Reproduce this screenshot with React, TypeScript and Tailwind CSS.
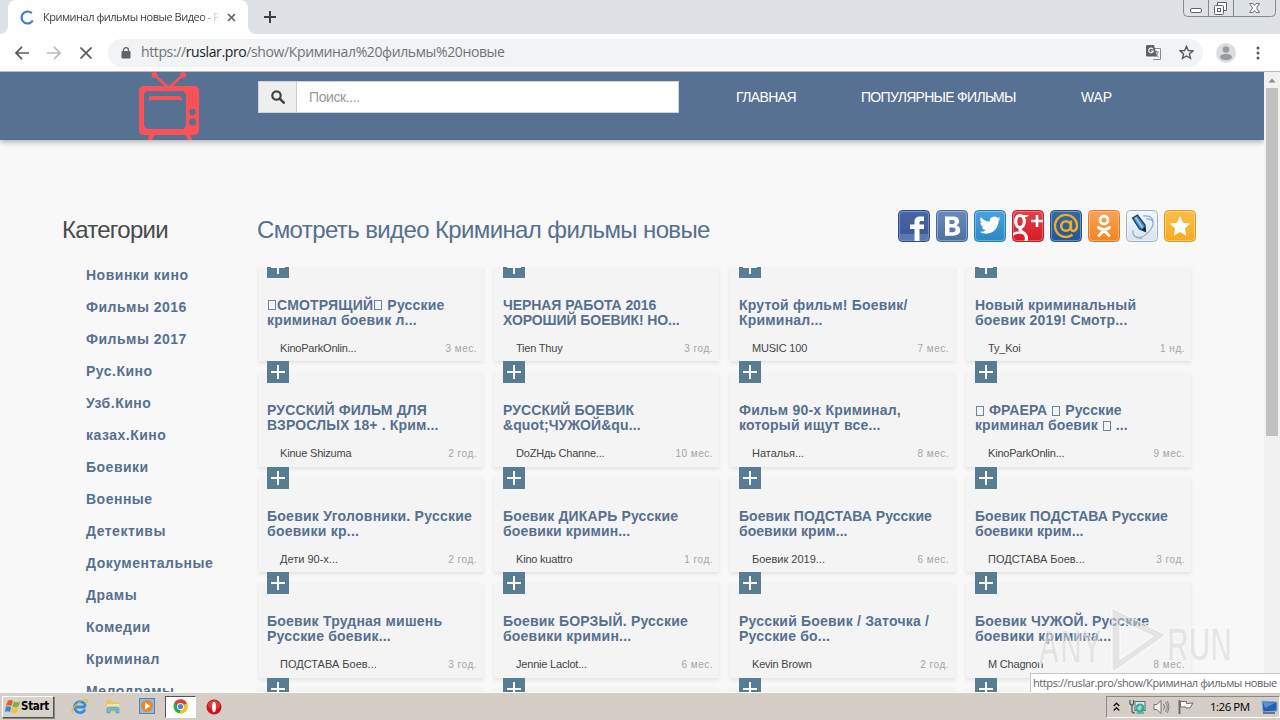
import React from "react";

const UI = "font-['Open_Sans','Noto_Sans',sans-serif]";

type Video = { t: [string, string]; by: string; ago: string; k?: string };

const videos: Video[] = [
  { t: ["▯СМОТРЯЩИЙ▯ Русские", "криминал боевик л..."], by: "KinoParkOnlin...", ago: "3 мес." },
  { t: ["ЧЕРНАЯ РАБОТА 2016", "ХОРОШИЙ БОЕВИК! НО..."], by: "Tien Thuy", ago: "3 год.", k: "tracking-[-0.08px]" },
  { t: ["Крутой фильм! Боевик/", "Криминал..."], by: "MUSIC 100", ago: "7 мес." },
  { t: ["Новый криминальный", "боевик 2019! Смотр..."], by: "Ty_Koi", ago: "1 нд." },
  { t: ["РУССКИЙ ФИЛЬМ ДЛЯ", "ВЗРОСЛЫХ 18+ . Крим..."], by: "Kinue Shizuma", ago: "2 год.", k: "tracking-[0.14px]" },
  { t: ["РУССКИЙ БОЕВИК", "&quot;ЧУЖОЙ&qu..."], by: "DoZHдь Channe...", ago: "10 мес.", k: "tracking-[0.1px]" },
  { t: ["Фильм 90-х Криминал,", "который ищут все..."], by: "Наталья...", ago: "8 мес." },
  { t: ["▯ ФРАЕРА ▯ Русские", "криминал боевик ▯ ..."], by: "KinoParkOnlin...", ago: "9 мес.", k: "tracking-[0.1px]" },
  { t: ["Боевик Уголовники. Русские", "боевики кр..."], by: "Дети 90-х...", ago: "2 год.", k: "tracking-[0.25px]" },
  { t: ["Боевик ДИКАРЬ Русские", "боевики кримин..."], by: "Kino kuattro", ago: "1 год.", k: "tracking-[0.14px]" },
  { t: ["Боевик ПОДСТАВА Русские", "боевики крим..."], by: "Боевик 2019...", ago: "6 мес.", k: "tracking-[0.04px]" },
  { t: ["Боевик ПОДСТАВА Русские", "боевики крим..."], by: "ПОДСТАВА Боев...", ago: "3 год.", k: "tracking-[0.04px]" },
  { t: ["Боевик Трудная мишень", "Русские боевик..."], by: "ПОДСТАВА Боев...", ago: "3 год." },
  { t: ["Боевик БОРЗЫЙ. Русские", "боевики кримин..."], by: "Jennie Laclot...", ago: "6 мес." },
  { t: ["Русский Боевик / Заточка /", "Русские бо..."], by: "Kevin Brown", ago: "2 год." },
  { t: ["Боевик ЧУЖОЙ. Русские", "боевики кримина..."], by: "M Chagnon", ago: "8 мес." },
  { t: ["", ""], by: "", ago: "" },
  { t: ["", ""], by: "", ago: "" },
  { t: ["", ""], by: "", ago: "" },
  { t: ["", ""], by: "", ago: "" },
];

const categories = [
  "Новинки кино", "Фильмы 2016", "Фильмы 2017", "Рус.Кино", "Узб.Кино", "казах.Кино", "Боевики",
  "Военные", "Детективы", "Документальные", "Драмы", "Комедии", "Криминал", "Мелодрамы",
];

function TitleLine({ text }: { text: string }) {
  return (
    <div className="flex h-[15px] items-center whitespace-pre">
      {text.split(/(▯)/).map((p, i) =>
        p === "▯" ? (
          <span key={i} className="mr-px ml-px inline-block h-[10px] w-[8px] border border-[#6b83a0]" />
        ) : (
          <span key={i}>{p}</span>
        ),
      )}
    </div>
  );
}

function Card({ v }: { v: Video }) {
  const latin = /^[A-Z]/.test(v.by);
  return (
    <div className="flex h-[105.5px] w-[225px] flex-col pt-[10.500px]">
      <div className="flex h-[95px] flex-col bg-[#f4f4f4] px-[9px] shadow-[0_2px_4px_rgba(0,0,0,0.09)]">
        <div className="-mt-[10.500px] flex h-[22px] w-[22px] shrink-0 items-center justify-center bg-[#587d93]">
          <svg width="22" height="22" viewBox="0 0 22 22" shapeRendering="crispEdges">
            <path d="M11 4v14M4 11h14" stroke="#fff" strokeWidth="2" />
          </svg>
        </div>
        <div className={`pt-[20px] text-[14px] leading-[15px] font-bold text-[#56708f] ${v.k ?? "tracking-[0.2px]"}`}>
          <TitleLine text={v.t[0]} />
          <TitleLine text={v.t[1]} />
        </div>
        <div className="mt-[13px] flex h-[15px] items-center justify-between pl-[13px]">
          <span className={`text-[11px] text-[#444] ${latin ? "tracking-[-0.2px]" : ""}`}>{v.by}</span>
          <span className="-mr-[3px] text-[10px] tracking-[0.5px] text-[#a5a5a5]">{v.ago}</span>
        </div>
      </div>
    </div>
  );
}

function Tile({ id, a, b, edge, children }: { id: string; a: string; b: string; edge: string; children: React.ReactNode }) {
  return (
    <svg width="32" height="32" viewBox="0 0 32 32">
      <defs>
        <linearGradient id={id} x1="0" y1="0" x2="0" y2="1">
          <stop offset="0" stopColor={a} />
          <stop offset="1" stopColor={b} />
        </linearGradient>
        <clipPath id={id + "c"}><rect x="1" y="1" width="30" height="30" rx="3.5" /></clipPath>
      </defs>
      <rect x="0.5" y="0.5" width="31" height="31" rx="4" fill={`url(#${id})`} stroke={edge} />
      <rect x="1.5" y="1.5" width="29" height="29" rx="3" fill="none" stroke="#fff" strokeOpacity="0.3" />
      <g clipPath={`url(#${id}c)`}>{children}</g>
    </svg>
  );
}

function Social() {
  return (
    <div className="flex gap-[6px]">
      <Tile id="fb" a="#4767a4" b="#3a5793" edge="#2e4a86">
        <path d="M1 24h30v7H1z" fill="#6d8bc0" opacity=".65" />
        <path d="M16.500 32V19H12v-4.500h4.500v-3C16.500 8 18.800 6.500 22 6.500h4v4.500h-2.500c-1.500 0-2 .6-2 2v1.500H26V19h-4.500v13z" fill="#fff" />
      </Tile>
      <Tile id="vk" a="#6a8cbc" b="#4a70a5" edge="#47699c">
        <path fillRule="evenodd" d="M9 6.500h8c4 0 6 1.700 6 4.700 0 2-1 3.400-2.700 4 2.400.6 3.900 2.200 3.900 4.800 0 3.600-2.700 5.700-7 5.700H9zM13.500 10v4h2.700c1.600 0 2.500-.7 2.500-2.100 0-1.300-.8-1.900-2.300-1.900zm0 7.500v4.700h3.300c1.700 0 2.700-.8 2.700-2.400s-1-2.300-2.700-2.300z" fill="#fff" />
      </Tile>
      <Tile id="tw" a="#4aa5dd" b="#2a86c5" edge="#2b7db8">
        <g transform="translate(5.500 4.500) scale(.88)">
          <path fill="#fff" d="M23.950 4.570a10 10 0 0 1-2.820.770 4.960 4.960 0 0 0 2.160-2.720c-.950.550-2 .950-3.130 1.190a4.920 4.920 0 0 0-8.380 4.480C7.690 8.090 4.070 6.130 1.640 3.160a4.920 4.920 0 0 0 1.520 6.570 4.900 4.900 0 0 1-2.230-.610v.060a4.920 4.920 0 0 0 3.950 4.830 5 5 0 0 1-2.210.080 4.940 4.940 0 0 0 4.600 3.420A9.870 9.870 0 0 1 0 19.540a14 14 0 0 0 7.550 2.210c9.050 0 14-7.500 14-13.990 0-.210 0-.420-.020-.630a9.940 9.940 0 0 0 2.420-2.560z" />
        </g>
      </Tile>
      <Tile id="gp" a="#e4404a" b="#d81a24" edge="#b91f27">
        <ellipse cx="8" cy="11.500" rx="4.300" ry="6" fill="none" stroke="#fff" strokeWidth="3.200" />
        <path d="M8 5h9l-2 2h-3" fill="#fff" />
        <path d="M9.500 17.500c-2.500 1.800-1.500 3 1.500 5 4.500 3 4 7 2 10" fill="none" stroke="#fff" strokeWidth="3.200" />
        <path d="M1 24.500c3-2 7-2.500 11-1.500" fill="none" stroke="#fff" strokeWidth="2.400" />
        <path d="M25 5v12M19 11h12" stroke="#fff" strokeWidth="2.600" />
      </Tile>
      <Tile id="ma" a="#36699f" b="#1f599b" edge="#2b5487">
        <circle cx="16" cy="16" r="4.800" fill="none" stroke="#f6ab20" strokeWidth="2.600" />
        <path d="M21 10.500v8c0 4 6 3 6-2.500A11 11 0 1 0 22.500 24.800" fill="none" stroke="#f6ab20" strokeWidth="2.400" />
      </Tile>
      <Tile id="ok" a="#f9a253" b="#f38423" edge="#db7925">
        <circle cx="16" cy="10" r="4" fill="none" stroke="#fff" strokeWidth="2.800" />
        <path d="M10.500 17.500c3.500 2.500 7.500 2.500 11 0M16 20l-5 5.500M16 20l5 5.500" fill="none" stroke="#fff" strokeWidth="3" strokeLinecap="round" />
      </Tile>
      <Tile id="lj" a="#f3f7fa" b="#d9e4ee" edge="#9fb1c4">
        <path d="M20 9c7-1 9 4 5 10-3 5-10 10-14 8M17 6c9-1 12 4 9 11M7 20c-1 5 3 9 9 8" fill="none" stroke="#8ca9c6" strokeWidth="1.100" />
        <path d="M6.500 8l5-3 7.500 10 .5 6.500-6-2.500z" fill="#4c8cc9" stroke="#183d62" strokeWidth="1.300" />
        <path d="M9.500 7.500l7 10" stroke="#a6d0f0" strokeWidth="1.500" /><path d="M16 19.500l3.500 2-.5-4.500z" fill="#123" />
      </Tile>
      <Tile id="st" a="#fbbf4b" b="#f8a91e" edge="#dc9a28">
        <path d="M16 6l3 6.700 7.300.8-5.400 5 1.500 7.200L16 22.100l-6.400 3.600 1.500-7.200-5.400-5 7.300-.8z" fill="#fff" />
      </Tile>
    </div>
  );
}

function BrowserChrome() {
  return (
    <div className={`h-[72px] bg-[#dee1e6] ${UI}`}>
      <div className="flex h-[34px] items-start justify-between">
        <div className="flex h-[34px] items-center">
          <div className="h-full w-2 bg-white">
            <div className="h-full rounded-br-lg bg-[#dee1e6]" />
          </div>
          <div className="flex h-full w-[240px] items-center rounded-t-lg bg-white pl-3">
            <svg width="15" height="15" viewBox="0 0 15 15"><path d="M11.800 3.200A6 6 0 1 0 12.800 10.500" fill="none" stroke="#3b78d8" strokeWidth="2.200" /></svg>
            <div className="ml-2 w-[177px] overflow-hidden text-[11px] tracking-[-0.48px] whitespace-nowrap text-[#3c4043] [mask-image:linear-gradient(to_right,black_90%,transparent)]">
              Криминал фильмы новые Видео - Р
            </div>
            <svg className="ml-[7px]" width="9" height="9" viewBox="0 0 9 9"><path d="M1 1l7 7M8 1L1 8" stroke="#5f6368" strokeWidth="1.700" /></svg>
          </div>
          <div className="h-full w-2 bg-white">
            <div className="h-full rounded-bl-lg bg-[#dee1e6]" />
          </div>
          <svg className="ml-[8px]" width="12" height="12" viewBox="0 0 12 12"><path d="M6 0v12M0 6h12" stroke="#3c4043" strokeWidth="2" /></svg>
        </div>
        <svg className="mr-[3px]" width="94" height="17" viewBox="0 0 94 17" fill="none">
          <path d="M.5 0v12.500a4 4 0 0 0 4 4h84a4 4 0 0 0 4-4V0M25.500 0v16M50.500 0v16" stroke="#858990" />
          <rect x="7.500" y="8.500" width="11" height="4" rx="1.500" fill="#fff" stroke="#5f6368" />
          <path d="M34.500 5V2.500h9v8H41" fill="#fff" stroke="#5f6368" />
          <rect x="31.500" y="5.500" width="9" height="9" rx="1" fill="#fff" stroke="#5f6368" /><rect x="34.500" y="8.500" width="3" height="3" stroke="#5f6368" />
          <path d="M66.500 3.500h3.500l1.500 2 1.500-2h3.500L73.500 8l3 4.500H73l-1.500-2-1.500 2h-3.500l3-4.500z" fill="#fff" stroke="#6f737a" />
        </svg>
      </div>
      <div className="flex h-[38px] items-center border-b border-[#b7babd] bg-white">
        <svg className="ml-[15px]" width="14" height="14" viewBox="0 0 14 14"><path d="M7 .8L1 7l6 6.200M1.200 7H14" fill="none" stroke="#55585d" strokeWidth="1.700" /></svg>
        <svg className="ml-[18px]" width="14" height="14" viewBox="0 0 14 14"><path d="M7 .8L13 7l-6 6.200M12.800 7H0" fill="none" stroke="#babcbe" strokeWidth="1.700" /></svg>
        <svg className="ml-[19px]" width="12" height="12" viewBox="0 0 12 12"><path d="M.5.5l11 11M11.500.5l-11 11" stroke="#55585d" strokeWidth="1.700" /></svg>
        <div className="ml-[16px] flex h-7 w-[1095px] items-center rounded-full bg-[#f1f3f4] pr-[9px] pl-[13px]">
          <svg width="10" height="12" viewBox="0 0 10 12"><rect x=".5" y="4" width="9" height="7.500" rx="1" fill="#5f6368" /><path d="M2.500 5V3.200a2.500 2.500 0 0 1 5 0V5" fill="none" stroke="#5f6368" strokeWidth="1.300" /></svg>
          <div className="ml-[10px] flex-1 pb-[2px] text-[14px] tracking-[-0.38px] text-[#6f7378]">
            https://<span className="text-[#202124]">ruslar.pro</span>/show/Криминал%20фильмы%20новые
          </div>
          <svg width="15" height="15" viewBox="0 0 15 15">
            <path d="M6 3.500h8.500v11H7" fill="#fff" stroke="#85888c" /><path d="M8 7h5M10.500 5.500V7M12 7c-.5 2.500-2 4-3.500 5M9.500 8.500l3 4" stroke="#85888c" fill="none" />
            <path d="M1 0h7l3 11.500H1a1 1 0 0 1-1-1V1a1 1 0 0 1 1-1z" fill="#5f6368" /><path d="M7 4.200A2.300 2.300 0 1 0 7.300 6H5" fill="none" stroke="#fff" strokeWidth="1.100" />
          </svg>
          <svg className="ml-[18px]" width="15" height="15" viewBox="0 0 15 15"><path d="M7.500 1.300l1.800 4.200 4.600.4-3.500 3 1.100 4.500-4-2.400-4 2.400 1.100-4.500-3.500-3 4.600-.4z" fill="none" stroke="#55585d" strokeWidth="1.400" /></svg>
        </div>
        <svg className="ml-[13px]" width="20" height="20" viewBox="0 0 20 20"><circle cx="10" cy="10" r="10" fill="#dcdddf" /><circle cx="10" cy="6.500" r="3.300" fill="#9a9da0" /><ellipse cx="10" cy="14" rx="6" ry="3.200" fill="#9a9da0" /></svg>
        <svg className="ml-[20px]" width="4" height="14" viewBox="0 0 4 14" fill="#55585d"><circle cx="2" cy="2" r="1.500" /><circle cx="2" cy="7" r="1.500" /><circle cx="2" cy="12" r="1.500" /></svg>
      </div>
    </div>
  );
}

function Tv() {
  return (
    <svg width="62" height="68" viewBox="0 0 62 68">
      <g fill="#fb5257">
        <circle cx="16.500" cy="3" r="3" /><circle cx="45" cy="3" r="3" />
        <path d="M17 2l14 12L44 2l1.500 2L33 16h-4L15.500 4z" />
        <path d="M11 62h6l-3 6h-4zM47 62h5l2 6h-4z" />
        <path fillRule="evenodd" d="M6 14h50q5 0 5 5v39q0 5-5 5H6q-5 0-5-5V19q0-5 5-5zm5 5q-5 0-5 5v28q0 5 5 5h32q5 0 5-5V24q0-5-5-5z" />
        <path d="M11 24h30q3 0 3 5-1-1-3-1H14l-3 1z" />
      </g>
      <circle cx="54.500" cy="40" r="3.200" fill="#56708f" /><circle cx="54.500" cy="50" r="3.600" fill="#56708f" />
      <path d="M51.500 20v14M54.500 20v14M57.500 20v14" stroke="#e8505a" />
    </svg>
  );
}

function Taskbar() {
  return (
    <div className="flex h-7 items-center border-t border-white bg-[#d4cec6] shadow-[0_-1px_0_#c9c5bf]">
      <div className="ml-[2px] flex h-[22px] w-[52px] items-center border border-t-white border-r-[#55524d] border-b-[#55524d] border-l-white bg-[#d6d1c9] pl-[2px] shadow-[1px_1px_0_#8d8982]">
        <svg width="16" height="16" viewBox="0 0 16 16"><path d="M2.500 2.500Q5 0 8 2L6.500 7Q4 5.500 1 7z" fill="#e8592b" /><path d="M9 2.500q3 1.500 6 0L13.500 7.500q-3 1.500-6 0z" fill="#74b43c" /><path d="M.8 8Q3 6.500 6.200 8L5 13Q2.500 11.500 0 13z" fill="#4182cd" /><path d="M7.200 8.500q3 1.500 6 0L12 13.500q-3 1.500-6 0z" fill="#f6bf34" /></svg>
        <span className="pt-px font-['DejaVu_Sans_Condensed','DejaVu_Sans',sans-serif] text-[11.500px] font-bold tracking-[-0.3px] text-black">Start</span>
      </div>
      <svg className="ml-[17px]" width="17" height="17" viewBox="0 0 17 17"><path d="M14.500 9H4.500M14 11.500A5.500 5.500 0 1 1 14.500 8.500" fill="none" stroke="#2f8edb" strokeWidth="2.800" /><path d="M1.500 15.500C-1 12 9 1 15.500 1.500c1.500.5 0 3-1 4" fill="none" stroke="#e9b536" strokeWidth="1.200" /></svg>
      <svg className="ml-[17px]" width="16" height="17" viewBox="0 0 16 17"><path d="M1 2h5l1 2h7v10H1z" fill="#e7c765" /><path d="M2 6h12v6H2z" fill="#f8e69a" /><path d="M2 15V11q0-2 2-2h8q2 0 2 2v4h-3v-3H5v3z" fill="#6fb7df" stroke="#4e9bc7" strokeWidth=".6" /></svg>
      <svg className="ml-[18px]" width="17" height="17" viewBox="0 0 17 17"><rect x=".5" y=".5" width="15" height="15" fill="#8dbce2" stroke="#4c86bb" /><circle cx="8" cy="8" r="6" fill="#f0861d" /><path d="M6 4.500v7l5.500-3.500z" fill="#fff" /></svg>
      <div className="ml-[9px] flex h-[22px] w-[31px] items-center justify-center border border-t-[#55524d] border-r-white border-b-white border-l-[#55524d] bg-white">
        <svg width="15" height="15" viewBox="0 0 15 15"><circle cx="7.500" cy="7.500" r="7" fill="#34a853" /><path d="M7.500 7.500L1.200 4.200a7 7 0 0 1 12.700.3z" fill="#e2402f" /><path d="M7.500 7.500L13.900 4.500A7 7 0 0 1 7 14.500z" fill="#fbc116" /><circle cx="7.500" cy="7.500" r="3.400" fill="#fff" /><circle cx="7.500" cy="7.500" r="2.600" fill="#4285f4" /></svg>
      </div>
      <svg className="ml-[10px]" width="16" height="16" viewBox="0 0 16 16"><circle cx="8" cy="8" r="7.500" fill="#c9151b" /><ellipse cx="8" cy="6" rx="6" ry="4.500" fill="#e45a55" opacity=".6" /><ellipse cx="8" cy="8" rx="1.900" ry="5.300" fill="#fff" /></svg>
      <div className="ml-auto flex h-[22px] w-[174px] items-center border border-t-[#8d8982] border-r-white border-b-white border-l-[#8d8982] pl-[6px]">
        <svg width="7" height="10" viewBox="0 0 7 10"><path d="M.7 4l2.800-2.800L6.300 4M.7 8.500l2.800-2.800 2.800 2.800" fill="none" stroke="#111" strokeWidth="1.300" /></svg>
        <svg className="ml-[9px]" width="17" height="16" viewBox="0 0 17 16"><path d="M1 1v3q0 2 2 2v6q0 2 3 2M4.500 1v3q0 2-2 2" fill="none" stroke="#4c5a60" strokeWidth="1.200" /><rect x="6" y="2.500" width="10" height="9" fill="#e1e8ea" stroke="#526d73" /><path d="M8 13h7v2H7z" fill="#8aa1a6" /><circle cx="11" cy="9" r="4.500" fill="#3ea79b" /><path d="M8 9l3-3 2 2-2 4z" fill="#9bded1" /></svg>
        <svg className="ml-[7px]" width="17" height="16" viewBox="0 0 17 16" fill="none" stroke="#74716d"><path d="M1 5.500h3l4-4v13l-4-4H1z" fill="#f5f4f2" /><path d="M10.500 5q2 3 0 6M12.500 3q3.500 5 0 10M14.500 2q3 6 0 12" strokeWidth=".9" /></svg>
        <svg className="ml-[7px]" width="17" height="16" viewBox="0 0 17 16"><path d="M2.500 1v14" stroke="#6f6d69" strokeWidth="2" /><path d="M3.500 2.500h6v2l6.500-.5-3 5H9l-.5-1h-5z" fill="#f8f7f5" stroke="#6f6d69" /></svg>
        <span className={`ml-[16px] text-[11.500px] tracking-[-0.5px] whitespace-nowrap text-black ${UI}`}>1:26 PM</span>
        <svg className="ml-[11px]" width="17" height="14" viewBox="0 0 17 14"><path d="M1 1l15 1v9l-14 1z" fill="#245fb0" stroke="#83aedd" /><path d="M2 2l12 1-10 5z" fill="#5b93d6" /><path d="M2 13h12" stroke="#48566b" strokeWidth="1.500" /></svg>
      </div>
    </div>
  );
}

function Watermark() {
  return (
    <svg className="absolute right-[44px] bottom-[18px]" width="200" height="68" viewBox="0 0 200 68" fontFamily="'Liberation Sans',Arial,sans-serif">
      <g fill="#d4d4d4" fillOpacity=".5" stroke="#fff" strokeOpacity=".8" strokeWidth="1.200">
        <text x="2" y="57" fontSize="49" fontWeight="bold" textLength="64" lengthAdjust="spacingAndGlyphs">ANY</text>
        <text x="131" y="55" fontSize="49" fontWeight="bold" textLength="65" lengthAdjust="spacingAndGlyphs">RUN</text>
        <path fillRule="evenodd" d="M76 2l54 27-51 36q-3 0-3-4zM84 15v38l33-23z" />
      </g>
    </svg>
  );
}

export default function App() {
  return (
    <div className="flex h-[720px] w-[1280px] flex-col overflow-hidden font-['Liberation_Sans',Arial,sans-serif]">
      <BrowserChrome />
      <div className="relative flex h-[620px] overflow-hidden bg-[#f8f8f8]">
        <main className="w-[1264px]">
          <header className="flex h-[68px] items-start bg-[#567191] shadow-[0_2px_6px_rgba(0,0,0,0.3)]">
            <div className="ml-[138px] w-[120px]"><Tv /></div>
            <div className="mt-[9px] flex h-[32px] w-[421px] border border-[#ccd3da] bg-white">
              <div className="flex w-[38px] items-center justify-center border-r border-[#ccc] bg-[#eee]">
                <svg width="14" height="14" viewBox="0 0 14 14"><circle cx="5.500" cy="5.500" r="4.200" fill="none" stroke="#444" strokeWidth="2.200" /><path d="M8.700 8.700l4 4" stroke="#444" strokeWidth="2.600" strokeLinecap="round" /></svg>
              </div>
              <span className="ml-3 text-[14px] leading-[31px] tracking-[-0.4px] text-[#999]">Поиск....</span>
            </div>
            <nav className="mt-[15px] ml-[57px] flex text-[14px] leading-[20px] whitespace-nowrap text-white">
              <span className="w-[125px] tracking-[-0.62px]">ГЛАВНАЯ</span>
              <span className="w-[220px] tracking-[-0.7px]">ПОПУЛЯРНЫЕ ФИЛЬМЫ</span>
              <span className="tracking-[-0.1px]">WAP</span>
            </nav>
          </header>
          <div className="flex pt-[70px]">
            <aside className="w-[257px] pl-[62px]">
              <h2 className="h-[49px] pt-[6px] text-[24px] leading-[28px] tracking-[-0.75px] text-[#4a4a4a]">Категории</h2>
              <ul className="pl-[24px] text-[14px] leading-[32px] font-bold tracking-[0.5px] text-[#56708f]">
                {categories.map((c) => <li key={c}>{c}</li>)}
              </ul>
            </aside>
            <section className="w-[939px]">
              <div className="flex h-[57px] items-start justify-between">
                <h1 className="pt-[6px] text-[24px] leading-[28px] tracking-[-0.62px] text-[#56708f]">Смотреть видео Криминал фильмы новые</h1>
                <Social />
              </div>
              <div className="h-[430px] overflow-hidden pl-px">
                <div className="-mt-[11.5px] grid w-[933px] grid-cols-4 gap-x-[11px]">
                  {videos.map((v, i) => <Card key={i} v={v} />)}
                </div>
              </div>
            </section>
          </div>
        </main>
        <div className="flex w-4 flex-col items-center bg-[#f1f1f1]">
          <svg width="16" height="16" viewBox="0 0 16 16"><path d="M4.500 10.500L8 6.500l3.500 4z" fill="#8b8b8b" /></svg>
          <div className="h-[348px] w-[12px] bg-[#c1c1c1]" />
        </div>
        <Watermark />
        <div className={`absolute right-0 bottom-0 h-[19px] w-[250px] border-t border-l border-[#c6c6c6] bg-white pl-[2px] text-[11px] leading-[18px] tracking-[-0.42px] whitespace-nowrap text-[#5f6368] ${UI}`}>
          https://ruslar.pro/show/Криминал фильмы новые
        </div>
      </div>
      <Taskbar />
    </div>
  );
}
